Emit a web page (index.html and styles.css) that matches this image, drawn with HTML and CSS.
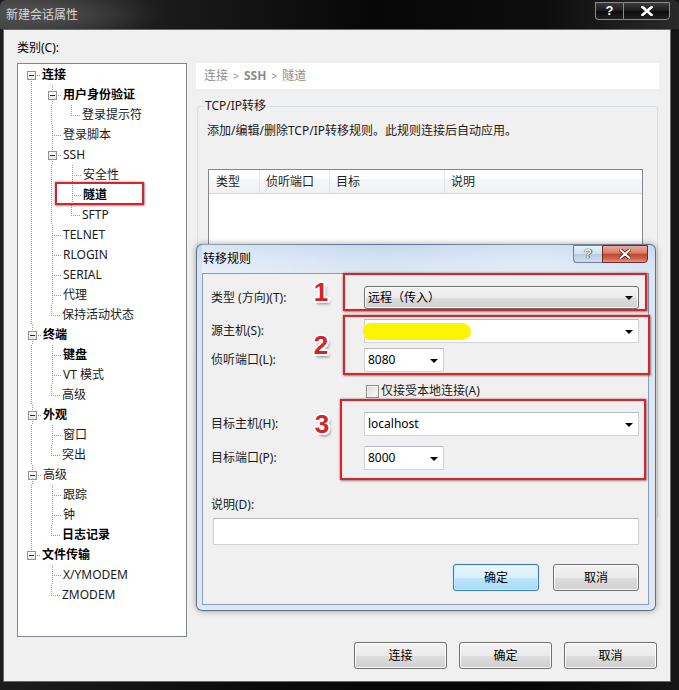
FILE: index.html
```html
<!DOCTYPE html>
<html lang="zh-CN">
<head>
<meta charset="utf-8">
<title>新建会话属性</title>
<link rel="stylesheet" href="styles.css">
</head>
<body>
<div class="window">
  <div class="titlebar">
    <span class="wtitle">新建会话属性</span>
    <div class="wbtns">
      <span class="wbtn whelp">?</span>
      <span class="wbtn wclose"><svg width="12" height="10" viewBox="0 0 12 10"><path d="M1.5 1 L10.5 9 M10.5 1 L1.5 9" stroke="#fff" stroke-width="2.6" stroke-linecap="square"/></svg></span>
    </div>
  </div>
  <div class="client">
    <div class="cat">类别(C):</div>
    <div class="main">
      <div class="tree">
        <div class="row"><i class="c f"><b class="box"></b></i><span class="t b">连接</span></div>
        <div class="row"><i class="c v"></i><i class="c t"><b class="box"></b></i><span class="t b">用户身份验证</span></div>
        <div class="row"><i class="c v"></i><i class="c v"></i><i class="c l"></i><span class="t">登录提示符</span></div>
        <div class="row"><i class="c v"></i><i class="c t"></i><span class="t">登录脚本</span></div>
        <div class="row"><i class="c v"></i><i class="c t"><b class="box"></b></i><span class="t">SSH</span></div>
        <div class="row"><i class="c v"></i><i class="c v"></i><i class="c t"></i><span class="t">安全性</span></div>
        <div class="row"><i class="c v"></i><i class="c v"></i><i class="c t"></i><span class="t b">隧道</span></div>
        <div class="row"><i class="c v"></i><i class="c v"></i><i class="c l"></i><span class="t">SFTP</span></div>
        <div class="row"><i class="c v"></i><i class="c t"></i><span class="t">TELNET</span></div>
        <div class="row"><i class="c v"></i><i class="c t"></i><span class="t">RLOGIN</span></div>
        <div class="row"><i class="c v"></i><i class="c t"></i><span class="t">SERIAL</span></div>
        <div class="row"><i class="c v"></i><i class="c t"></i><span class="t">代理</span></div>
        <div class="row"><i class="c v"></i><i class="c l"></i><span class="t">保持活动状态</span></div>
        <div class="row"><i class="c t"><b class="box"></b></i><span class="t b">终端</span></div>
        <div class="row"><i class="c v"></i><i class="c t"></i><span class="t b">键盘</span></div>
        <div class="row"><i class="c v"></i><i class="c t"></i><span class="t">VT 模式</span></div>
        <div class="row"><i class="c v"></i><i class="c l"></i><span class="t">高级</span></div>
        <div class="row"><i class="c t"><b class="box"></b></i><span class="t b">外观</span></div>
        <div class="row"><i class="c v"></i><i class="c t"></i><span class="t">窗口</span></div>
        <div class="row"><i class="c v"></i><i class="c l"></i><span class="t">突出</span></div>
        <div class="row"><i class="c t"><b class="box"></b></i><span class="t">高级</span></div>
        <div class="row"><i class="c v"></i><i class="c t"></i><span class="t">跟踪</span></div>
        <div class="row"><i class="c v"></i><i class="c t"></i><span class="t">钟</span></div>
        <div class="row"><i class="c v"></i><i class="c l"></i><span class="t b">日志记录</span></div>
        <div class="row"><i class="c l"><b class="box"></b></i><span class="t b">文件传输</span></div>
        <div class="row"><i class="c"></i><i class="c t"></i><span class="t">X/YMODEM</span></div>
        <div class="row"><i class="c"></i><i class="c l"></i><span class="t">ZMODEM</span></div>
        <div class="mark"></div>
      </div>
      <div class="panel">
        <div class="crumb">连接 <span class="gt">&gt;</span> <b>SSH</b> <span class="gt">&gt;</span> 隧道</div>
        <fieldset class="group">
          <legend>TCP/IP转移</legend>
          <p class="desc">添加/编辑/删除TCP/IP转移规则。此规则连接后自动应用。</p>
          <div class="list">
            <div class="lhead">
              <span class="col c1">类型</span>
              <span class="col c2">侦听端口</span>
              <span class="col c3">目标</span>
              <span class="col c4">说明</span>
            </div>
          </div>
        </fieldset>
      </div>
    </div>
    <div class="footer">
      <button class="btn fbtn">连接</button>
      <button class="btn fbtn">确定</button>
      <button class="btn fbtn">取消</button>
    </div>
  </div>

  <div class="dialog">
    <div class="dtitle">
      <span class="dtext">转移规则</span>
      <div class="dbtns">
        <span class="dbtn dhelp">?</span>
        <span class="dbtn dclose"><svg width="12" height="10" viewBox="0 0 12 10"><path d="M1.5 1 L10.5 9 M10.5 1 L1.5 9" stroke="#4a1a14" stroke-width="3.6" stroke-linecap="square"/><path d="M1.5 1 L10.5 9 M10.5 1 L1.5 9" stroke="#fff" stroke-width="2" stroke-linecap="square"/></svg></span>
      </div>
    </div>
    <div class="dclient">
      <div class="frow r1"><span class="lbl">类型 (方向)(T):</span><div class="dd wide"><span class="val">远程（传入）</span><i class="arr"></i></div></div>
      <div class="frow r2"><span class="lbl">源主机(S):</span><div class="combo wide"><span class="hl"></span><i class="arr"></i></div></div>
      <div class="frow r3"><span class="lbl">侦听端口(L):</span><div class="combo narrow"><span class="val">8080</span><i class="arr"></i></div></div>
      <div class="chk"><span class="cb"></span><span>仅接受本地连接(A)</span></div>
      <div class="frow r4"><span class="lbl">目标主机(H):</span><div class="combo wide"><span class="val">localhost</span><i class="arr"></i></div></div>
      <div class="frow r5"><span class="lbl">目标端口(P):</span><div class="combo narrow"><span class="val">8000</span><i class="arr"></i></div></div>
      <div class="dlabel">说明(D):</div>
      <div class="textbox"></div>
      <div class="dbuttons">
        <button class="btn dbtnx def">确定</button>
        <button class="btn dbtnx">取消</button>
      </div>
    </div>
    <div class="anno a1"></div>
    <div class="anno a2"></div>
    <div class="anno a3"></div>
    <span class="num n1">1</span>
    <span class="num n2">2</span>
    <span class="num n3">3</span>
  </div>
</div>
</body>
</html>
```

FILE: styles.css
```css
html, body {
  margin: 0;
  padding: 0;
  background: #000;
  width: 679px;
  height: 690px;
  overflow: hidden;
}

.window {
  position: relative;
  width: 679px;
  height: 690px;
  box-sizing: border-box;
  display: flex;
  flex-direction: column;
  background: linear-gradient(90deg, #1c1c1c 0, #0a0a0a 40%, #050505 75%, #151515 100%);
  font: 12px/16px "Noto Sans", "Noto Sans CJK SC", sans-serif;
  color: #000;
}

/* ---------- outer title bar ---------- */
.titlebar {
  height: 29px;
  flex: none;
  display: flex;
  justify-content: space-between;
  background:
    radial-gradient(ellipse 120px 26px at 40px 14px, rgba(110,110,110,.55), rgba(0,0,0,0) 100%),
    linear-gradient(90deg, #3a3a3a 0, #1a1a1a 25%, #070707 55%, #0d0d0d 80%, #2a2a2a 100%);
  border-radius: 6px 6px 0 0;
}
.wtitle {
  color: #d6d6d6;
  padding-left: 6px;
  line-height: 30px;
}
.wbtns {
  display: flex;
  align-self: flex-start;
  margin: 2px 9px 0 0;
}
.wbtn {
  height: 18px;
  box-sizing: border-box;
  border: 1px solid #8a8a8a;
  background: linear-gradient(#3c3c3c, #1a1a1a 50%, #0c0c0c 50%, #202020);
  display: flex;
  align-items: center;
  justify-content: center;
  color: #fff;
  font: bold 13px/16px "Liberation Sans", sans-serif;
}
.whelp { width: 28px; border-radius: 0 0 0 4px; border-right: none; }
.wclose { width: 47px; border-radius: 0 0 4px 0; }

/* ---------- client ---------- */
.client {
  flex: none;
  height: 653px;
  margin: 0 8px 0 3px;
  box-sizing: border-box;
  border: 1px solid #6a6a6a;
  background: #f0f0f0;
  padding: 10px 11px 0 13px;
  display: flex;
  flex-direction: column;
}
.cat {
  line-height: 16px;
  height: 16px;
}
.main {
  margin-top: 7px;
  height: 574px;
  display: flex;
  gap: 9px;
}

/* ---------- tree ---------- */
.tree {
  position: relative;
  width: 170px;
  flex: none;
  box-sizing: border-box;
  border: 1px solid #828790;
  background: #fff;
  padding: 1px 0 0 3px;
}
.row {
  display: flex;
  height: 20px;
  align-items: center;
}
.row .t {
  margin-left: 1px;
  line-height: 20px;
  white-space: nowrap;
  color: #1a1a1a;
}
.row .t.b { font-weight: 700; color: #000; }

.c {
  --dv: repeating-linear-gradient(to bottom, #9a9a9a 0 1px, transparent 1px 2px);
  --dh: repeating-linear-gradient(to right, #9a9a9a 0 1px, transparent 1px 2px);
  display: block;
  flex: none;
  width: 20px;
  height: 20px;
}
.c.v { background: var(--dv) 10px 0 / 1px 20px no-repeat; }
.c.t { background: var(--dv) 10px 0 / 1px 20px no-repeat, var(--dh) 10px 10px / 10px 1px no-repeat; }
.c.l { background: var(--dv) 10px 0 / 1px 10px no-repeat, var(--dh) 10px 10px / 10px 1px no-repeat; }
.c.f { background: var(--dv) 10px 10px / 1px 10px no-repeat, var(--dh) 10px 10px / 10px 1px no-repeat; }
.box {
  display: block;
  width: 9px;
  height: 9px;
  margin: 6px 0 0 6px;
  box-sizing: border-box;
  border: 1px solid #919191;
  background:
    linear-gradient(#2b2b2b, #2b2b2b) 1px 3px / 5px 1px no-repeat,
    linear-gradient(#ffffff, #e6e6e6);
}
.mark {
  position: absolute;
  left: 37px;
  top: 118px;
  width: 89px;
  height: 23px;
  box-sizing: border-box;
  border: 2px solid #cc2a30;
  box-shadow: 0 0 2px rgba(140,20,20,.6), 1px 1px 2px rgba(0,0,0,.25);
}

/* ---------- right panel ---------- */
.panel {
  flex: 1;
  display: flex;
  flex-direction: column;
}
.crumb {
  height: 26px;
  line-height: 26px;
  background: #fff;
  padding-left: 8px;
  color: #8d8d8d;
}
.crumb b { font-weight: 700; color: #8a8a8a; }
.crumb .gt { font-size: 10px; padding: 0 2px; }

.group {
  margin: 9px 1px 0 1px;
  padding: 0;
  height: 421px;
  box-sizing: border-box;
  border: 1px solid #d5dfe5;
  border-radius: 3px;
  min-width: 0;
}
.group legend {
  padding: 0 2px;
  margin-left: 5px;
  line-height: 16px;
  color: #1a1a1a;
}
.desc {
  margin: 9px 0 0 9px;
  line-height: 16px;
  color: #1a1a1a;
}
.list {
  margin: 30px 0 0 10px;
  width: 435px;
  height: 260px;
  box-sizing: border-box;
  border: 1px solid #828790;
  background: #fff;
}
.lhead {
  display: flex;
  height: 24px;
  box-sizing: border-box;
  border-bottom: 1px solid #d5d5d5;
  background: linear-gradient(#ffffff 0, #ffffff 40%, #f6f7f8 41%, #f0f1f2 100%);
}
.col {
  line-height: 23px;
  padding-left: 6px;
  box-sizing: border-box;
  border-right: 1px solid #e3e5e8;
  color: #1e1e1e;
  white-space: nowrap;
}
.col.c1 { width: 51px; padding-left: 7px; }
.col.c2 { width: 70px; }
.col.c3 { width: 115px; }
.col.c4 { flex: 1; border-right: none; }

/* ---------- buttons ---------- */
.btn {
  font: 12px/16px "Noto Sans", "Noto Sans CJK SC", sans-serif;
  color: #000;
  padding: 0;
  box-sizing: border-box;
  border: 1px solid #707070;
  border-radius: 3px;
  background: linear-gradient(#f2f2f2 0%, #ebebeb 50%, #dddddd 51%, #cfcfcf 100%);
  box-shadow: inset 0 0 0 1px #fbfbfb;
}
.footer {
  margin-top: 5px;
  margin-right: 2px;
  display: flex;
  justify-content: flex-end;
  gap: 12px;
}
.fbtn {
  width: 93px;
  height: 27px;
}

/* ---------- dialog ---------- */
.dialog {
  position: absolute;
  left: 196px;
  top: 244px;
  width: 460px;
  height: 367px;
  box-sizing: border-box;
  padding: 0 7px 6px 6px;
  border-radius: 6px;
  background: linear-gradient(180deg, #c2d7ee 0, #d3e2f3 14px, #dbe6f3 29px, #dfe8f2 100%);
  box-shadow: inset 0 0 0 1px #5e7188, 0 0 6px rgba(0,0,0,.35);
  display: flex;
  flex-direction: column;
}
.dtitle {
  height: 29px;
  flex: none;
  display: flex;
  justify-content: space-between;
  background: linear-gradient(90deg, rgba(255,255,255,.35) 0, rgba(255,255,255,0) 40%, rgba(255,255,255,.25) 75%, rgba(255,255,255,0) 100%);
}
.dtext {
  padding-left: 1px;
  line-height: 29px;
  color: #000;
}
.dbtns {
  display: flex;
  align-self: flex-start;
  margin: 1px 1px 0 0;
}
.dbtn {
  height: 18px;
  box-sizing: border-box;
  display: flex;
  align-items: center;
  justify-content: center;
}
.dhelp {
  width: 29px;
  border: 1px solid #6d7f95;
  border-right: none;
  border-radius: 0 0 0 4px;
  background: linear-gradient(#e9f0f8, #d3dfec 50%, #bccbdc 51%, #cfdcea);
  color: #fff;
  font: bold 13px/16px "Liberation Sans", sans-serif;
  text-shadow: 0 0 1px #2c3e55, 0 0 1px #2c3e55, 1px 0 0 #5a6b80;
}
.dclose {
  width: 46px;
  border: 1px solid #6b2a22;
  border-radius: 0 0 4px 0;
  background: linear-gradient(#e9a99c, #d67d68 45%, #c5452e 50%, #d0634c 80%, #e59a7f 100%);
}
.dclient {
  flex: 1;
  box-sizing: border-box;
  border: 1px solid #8a9db7;
  background: #f0f0f0;
  padding: 0 9px 0 0;
  display: flex;
  flex-direction: column;
}
.frow {
  display: flex;
  align-items: center;
}
.lbl {
  width: 153px;
  padding-left: 8px;
  flex: none;
  color: #1a1a1a;
}
.r1 { margin-top: 12px; height: 23px; }
.r2 { margin-top: 10px; height: 24px; }
.r3 { margin-top: 5px; height: 24px; }
.r4 { margin-top: 14px; height: 24px; }
.r5 { margin-top: 10px; height: 24px; }

.dd, .combo {
  height: 100%;
  box-sizing: border-box;
  display: flex;
  align-items: center;
  justify-content: space-between;
  padding: 0 5px 0 3px;
}
.wide { width: 275px; }
.narrow { width: 80px; }
.dd {
  border: 1px solid #707070;
  border-radius: 3px;
  background: linear-gradient(#f3f3f3 0%, #ebebeb 50%, #dddddd 51%, #d0d0d0 100%);
  box-shadow: inset 0 0 0 1px #fafafa;
}
.combo {
  border: 1px solid #d0d3d8;
  border-top-color: #b8bbc1;
  background: #fff;
}
.val { color: #000; }
.arr {
  display: block;
  width: 0;
  height: 0;
  border-left: 4px solid transparent;
  border-right: 4px solid transparent;
  border-top: 4px solid #000;
  margin-top: 1px;
}
.hl {
  display: block;
  width: 108px;
  height: 17px;
  margin-left: -5px;
  border-radius: 8px 10px 10px 8px / 8px 9px 9px 8px;
  background: #fcf400;
  filter: blur(0.6px);
}
.chk {
  margin-top: 12px;
  margin-left: 163px;
  height: 14px;
  display: flex;
  align-items: center;
  gap: 2px;
  color: #1a1a1a;
}
.cb {
  width: 13px;
  height: 13px;
  box-sizing: border-box;
  border: 1px solid #8e8f8f;
  background: linear-gradient(135deg, #dcdcdc, #fbfbfb);
  box-shadow: inset 0 0 0 1px #f4f4f4;
}
.dlabel {
  margin-top: 27px;
  padding-left: 8px;
  line-height: 16px;
  color: #1a1a1a;
}
.textbox {
  margin: 5px 0 0 10px;
  height: 27px;
  box-sizing: border-box;
  border: 1px solid #d0d3d8;
  border-top-color: #b8bbc1;
  background: #fff;
}
.dbuttons {
  margin-top: 19px;
  display: flex;
  justify-content: flex-end;
  gap: 14px;
}
.dbtnx {
  width: 86px;
  height: 27px;
}
.btn.def {
  border-color: #3c7fb1;
  background: linear-gradient(#eaf6fd 0%, #d9f0fc 50%, #bee6fd 51%, #a7d9f5 100%);
  box-shadow: inset 0 0 0 1px #c6ecff, 0 0 1px #5fb3e6;
}

/* ---------- annotations ---------- */
.anno {
  position: absolute;
  box-sizing: border-box;
  border: 2px solid #cc2a30;
  box-shadow: 0 0 2px rgba(140,20,20,.6), 1px 1px 2px rgba(0,0,0,.3), inset 0 0 1px rgba(140,20,20,.5);
}
.a1 { left: 147px; top: 29px; width: 304px; height: 38px; }
.a2 { left: 147px; top: 71px; width: 307px; height: 60px; }
.a3 { left: 144px; top: 155px; width: 306px; height: 81px; }
.num {
  position: absolute;
  width: 24px;
  height: 30px;
  line-height: 30px;
  text-align: center;
  font: bold 26px/30px "Liberation Sans", sans-serif;
  color: #d4232b;
  text-shadow:
    -2px 0 #fff, 2px 0 #fff, 0 -2px #fff, 0 2px #fff,
    -1.5px -1.5px #fff, 1.5px 1.5px #fff, -1.5px 1.5px #fff, 1.5px -1.5px #fff,
    2px 3px 3px rgba(0,0,0,.45);
}
.n1 { left: 113px; top: 33px; }
.n2 { left: 113px; top: 86px; }
.n3 { left: 114px; top: 165px; }
```
